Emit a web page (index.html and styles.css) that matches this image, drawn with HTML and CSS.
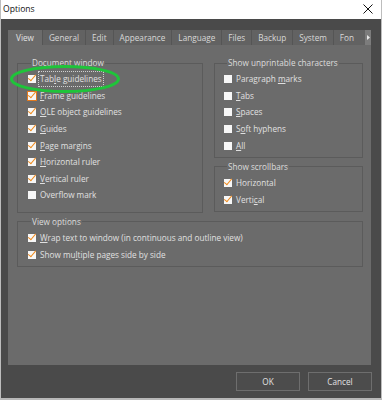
FILE: index.html
```html
<!DOCTYPE html>
<html>
<head>
<meta charset="utf-8">
<link rel="stylesheet" href="styles.css">
</head>
<body>
<div class="window">
  <div class="titlebar">
    <span class="title">Options</span>
    <svg class="close" width="10" height="10" viewBox="0 0 10 10"><path d="M0.5 0.5 L9.5 9.5 M9.5 0.5 L0.5 9.5" stroke="#111" stroke-width="1" fill="none"/></svg>
  </div>
  <div class="body">
    <div class="tabbar">
      <div class="tabs">
        <div class="tab active">View</div>
        <div class="tab">General</div>
        <div class="tab">Edit</div>
        <div class="tab">Appearance</div>
        <div class="tab">Language</div>
        <div class="tab">Files</div>
        <div class="tab">Backup</div>
        <div class="tab">System</div>
        <div class="tab last">Fon</div>
      </div>
      <div class="tabscroll"><svg width="3" height="5" viewBox="0 0 3 5"><path d="M0 0 L3 2.5 L0 5 Z" fill="#e8e8e8"/></svg></div>
    </div>
    <div class="panel">
      <div class="cols">
        <fieldset class="group">
          <legend>Document window</legend>
          <div class="row focus"><span class="cb on"></span><span class="lbl dotted">Tab<u>l</u>e guidelines</span></div>
          <div class="row"><span class="cb on hot"></span><span class="lbl"><u>F</u>rame guidelines</span></div>
          <div class="row"><span class="cb on"></span><span class="lbl"><u>O</u>LE object guidelines</span></div>
          <div class="row"><span class="cb on"></span><span class="lbl"><u>G</u>uides</span></div>
          <div class="row"><span class="cb on"></span><span class="lbl"><u>P</u>age margins</span></div>
          <div class="row"><span class="cb on"></span><span class="lbl"><u>H</u>orizontal ruler</span></div>
          <div class="row"><span class="cb on"></span><span class="lbl"><u>V</u>ertical ruler</span></div>
          <div class="row"><span class="cb"></span><span class="lbl">Overflow mark</span></div>
        </fieldset>
        <div class="rightcol">
          <fieldset class="group">
            <legend>Show unprintable characters</legend>
            <div class="row"><span class="cb"></span><span class="lbl">Paragraph <u>m</u>arks</span></div>
            <div class="row"><span class="cb"></span><span class="lbl"><u>T</u>abs</span></div>
            <div class="row"><span class="cb"></span><span class="lbl"><u>S</u>paces</span></div>
            <div class="row"><span class="cb"></span><span class="lbl">S<u>o</u>ft hyphens</span></div>
            <div class="row"><span class="cb"></span><span class="lbl"><u>A</u>ll</span></div>
          </fieldset>
          <fieldset class="group">
            <legend>Show scrollbars</legend>
            <div class="row"><span class="cb on"></span><span class="lbl">Horizontal</span></div>
            <div class="row"><span class="cb on"></span><span class="lbl">Verti<u>c</u>al</span></div>
          </fieldset>
        </div>
      </div>
      <fieldset class="group wide">
        <legend>View options</legend>
        <div class="row"><span class="cb on"></span><span class="lbl"><u>W</u>rap text to window (in continuous and outline view)</span></div>
        <div class="row"><span class="cb on"></span><span class="lbl">Show mu<u>l</u>tiple pages side by side</span></div>
      </fieldset>
      <svg class="annot" width="112" height="30" viewBox="0 0 112 30"><ellipse cx="56" cy="15" rx="53.5" ry="12.5" fill="none" stroke="#1fc43a" stroke-width="3"/></svg>
    </div>
    <div class="buttons">
      <div class="btn">OK</div>
      <div class="btn">Cancel</div>
    </div>
  </div>
</div>
</body>
</html>
```
FILE: styles.css
```css
* { box-sizing: border-box; }
html, body { margin: 0; padding: 0; }
body {
  width: 382px;
  height: 400px;
  overflow: hidden;
  font-family: "Open Sans", "Noto Sans", sans-serif;
  font-size: 8.2px;
}
.window {
  width: 382px;
  height: 400px;
  background: #4a4a4a;
  border-left: 1px solid #bdbdbd;
  border-right: 1px solid #bdbdbd;
  border-bottom: 2px solid #b8b8b8;
  display: flex;
  flex-direction: column;
}
.titlebar {
  height: 19px;
  background: #ffffff;
  display: flex;
  align-items: center;
  justify-content: space-between;
  padding: 0 8px 1px 2px;
  flex: none;
}
.title { color: #111; font-size: 8.6px; }
.close { display: block; }
.body {
  flex: 1;
  padding: 11px 10px 0 7px;
  display: flex;
  flex-direction: column;
}
.tabbar {
  display: flex;
  height: 15px;
  width: 363px;
}
.tabs {
  flex: 1;
  display: flex;
  overflow: hidden;
  background: #4a4a4a;
}
.tab {
  flex: none;
  height: 15px;
  line-height: 15px;
  padding: 0 6px 0 6px;
  background: #626262;
  color: #d8d8d8;
  border-right: 1px solid #555;
}
.tab.last { flex: 1; border-right: none; }
.tab.active { background: #6b6b6b; color: #e2e2e2; padding: 0 8px 0 8px; }
.tabscroll {
  width: 6px;
  height: 15px;
  flex: none;
  background: #7c7c7c;
  display: flex;
  align-items: center;
  justify-content: center;
}
.tabscroll svg { display: block; }
.panel {
  position: relative;
  width: 363px;
  height: 320px;
  background: #6b6b6b;
  padding: 12px 8px 0 9px;
}
.cols {
  display: flex;
  gap: 11px;
}
.cols > .group { width: 186px; flex: none; padding-bottom: 8px; }
.rightcol {
  flex: 1;
  display: flex;
  flex-direction: column;
  gap: 3px;
}
.group {
  margin: 0;
  border: 1px solid #5b5b5b;
  padding: 2px 8px 3px 10px;
  min-width: 0;
}
.rightcol .group { padding-left: 9px; }
.group legend {
  padding: 0 1px;
  margin-left: 3px;
  color: #dcdcdc;
  line-height: 12px;
  height: 12px;
}
.wide { margin-top: 3px; padding-bottom: 3px; }
.row {
  height: 16.6px;
  display: flex;
  align-items: center;
  color: #e0e0e0;
}
.row u { text-decoration: underline; text-underline-offset: 1px; }
.cb {
  position: relative;
  width: 8px;
  height: 8px;
  background: #f7f7f7;
  flex: none;
  margin-right: 4px;
}
.cb.on::after {
  content: "";
  position: absolute;
  left: 2px;
  top: -2px;
  width: 3px;
  height: 7px;
  border-right: 1.6px solid #f08a1c;
  border-bottom: 1.6px solid #f08a1c;
  transform: rotate(40deg);
}
.cb.hot { outline: 1px solid #e07a20; }
.lbl { line-height: 12px; white-space: nowrap; }
.dotted { outline: 1px dotted #d0d0d0; outline-offset: 0; padding: 1px 1px; margin-left: -1px; }
.annot {
  position: absolute;
  left: 1px;
  top: 19px;
}
.buttons {
  display: flex;
  justify-content: flex-end;
  gap: 8px;
  padding-top: 7px;
  width: 364px;
}
.btn {
  width: 64px;
  height: 19px;
  border: 1px solid #6e6e6e;
  background: #4c4c4c;
  color: #e2e2e2;
  display: flex;
  align-items: center;
  justify-content: center;
}
```
